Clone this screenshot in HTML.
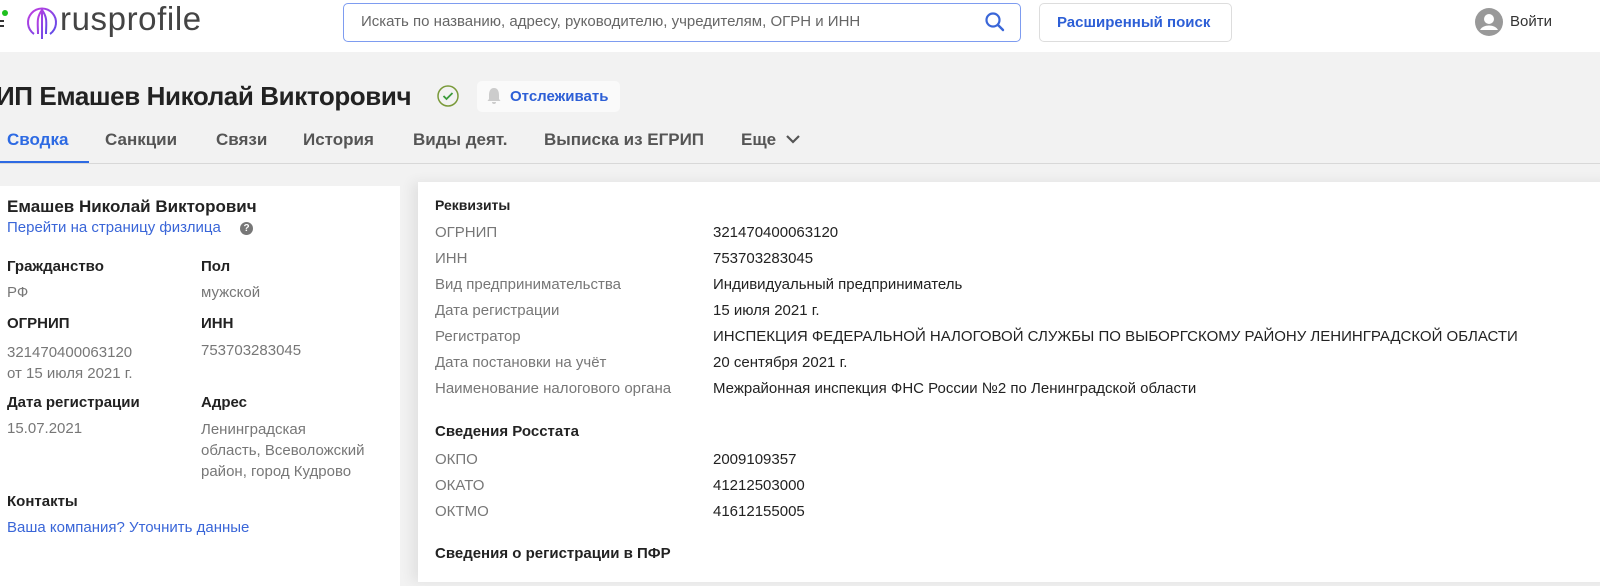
<!DOCTYPE html>
<html><head><meta charset="utf-8"><style>
*{margin:0;padding:0;box-sizing:border-box}
body{width:1600px;height:565px;overflow:hidden;background:#f2f2f2;font-family:"Liberation Sans",sans-serif;color:#222;position:relative}
.a{position:absolute;white-space:nowrap}
.hdr{position:absolute;left:0;top:0;width:1600px;height:52px;background:#fff}
.tab{position:absolute;top:130px;font-size:17px;color:#555;font-weight:bold}
.card{position:absolute;background:#fff}
.lb{color:#777;font-size:15px}
.v{font-size:15px;color:#222}
.b{font-weight:bold;font-size:15px;color:#222}
.lk{color:#3a66d8;font-size:15px}
</style></head><body>
<div class="hdr">
 <div class="a" style="left:0;top:20px;width:4px;height:2px;background:#333;box-shadow:0 5px 0 #333"></div>
 <div class="a" style="left:2px;top:10px;width:6px;height:6px;border-radius:50%;background:#1fc01f"></div>
 <svg class="a" style="left:26px;top:4px" width="32" height="36" viewBox="0 0 32 36"><defs><linearGradient id="g" x1="0" y1="0" x2="1" y2="1"><stop offset="0" stop-color="#c43de0"/><stop offset="1" stop-color="#5b4be8"/></linearGradient></defs><path d="M8 30 A14 14 0 1 1 24 30" fill="none" stroke="url(#g)" stroke-width="2"/><path d="M16 35 V8 M12 30 C12 20 10 14 16 6 C22 14 20 20 20 30" fill="none" stroke="url(#g)" stroke-width="2"/></svg>
 <div class="a" style="left:60px;top:0px;font-size:33px;color:#444;letter-spacing:0.6px">rusprofile</div>
 <div class="a" style="left:343px;top:3px;width:678px;height:39px;border:1px solid #7e9cf0;border-radius:5px"></div>
 <div class="a" style="left:361px;top:13px;font-size:15px;color:#666">Искать по названию, адресу, руководителю, учредителям, ОГРН и ИНН</div>
 <svg class="a" style="left:984px;top:11px" width="22" height="22" viewBox="0 0 22 22"><circle cx="9" cy="9" r="6.5" fill="none" stroke="#3a66d8" stroke-width="2.2"/><path d="M14 14 L19 19" stroke="#3a66d8" stroke-width="2.4" stroke-linecap="round"/></svg>
 <div class="a" style="left:1039px;top:3px;width:193px;height:39px;border:1px solid #ddd;border-radius:5px"></div>
 <div class="a" style="left:1057px;top:14px;font-size:15px;color:#2d5fd6;font-weight:bold">Расширенный поиск</div>
 <svg class="a" style="left:1475px;top:8px" width="28" height="28" viewBox="0 0 28 28"><circle cx="14" cy="14" r="14" fill="#999"/><circle cx="14" cy="11" r="5" fill="#fff"/><path d="M5 22 C8 16 20 16 23 22 Z" fill="#fff"/></svg>
 <div class="a" style="left:1510px;top:13px;font-size:15px;color:#333">Войти</div>
</div>
<div class="a" style="left:-4px;top:81px;font-size:26px;font-weight:bold;color:#222;letter-spacing:-0.4px">ИП Емашев Николай Викторович</div>
<svg class="a" style="left:436px;top:84px" width="24" height="24" viewBox="0 0 24 24"><circle cx="12" cy="12" r="10" fill="none" stroke="#7a9a3a" stroke-width="1.5"/><path d="M7.5 12 L10.5 15 L16.5 9" fill="none" stroke="#3a9a3a" stroke-width="1.8"/></svg>
<div class="a" style="left:477px;top:81px;width:143px;height:31px;background:#fafafa;border-radius:5px"></div>
<svg class="a" style="left:487px;top:87px" width="14" height="18" viewBox="0 0 14 18"><path d="M7 1 C3 1 2 5 2 8 V12 L0.5 14 H13.5 L12 12 V8 C12 5 11 1 7 1 Z M5 15 A2 2 0 0 0 9 15 Z" fill="#ccc"/></svg>
<div class="a" style="left:510px;top:88px;font-size:15px;color:#2d5fd6;font-weight:bold">Отслеживать</div>
<div class="tab" style="left:7px;color:#2d6ae3">Сводка</div>
<div class="tab" style="left:105px">Санкции</div>
<div class="tab" style="left:216px">Связи</div>
<div class="tab" style="left:303px">История</div>
<div class="tab" style="left:413px">Виды деят.</div>
<div class="tab" style="left:544px">Выписка из ЕГРИП</div>
<div class="tab" style="left:741px">Еще</div>
<svg class="a" style="left:785px;top:133px" width="16" height="12" viewBox="0 0 16 12"><path d="M2 3 L8 9 L14 3" fill="none" stroke="#555" stroke-width="2.2"/></svg>
<div class="a" style="left:0;top:163px;width:1600px;height:1px;background:#d8d8d8"></div>
<div class="a" style="left:0;top:161px;width:89px;height:2px;background:#2d6ae3"></div>

<div class="card" style="left:0;top:186px;width:400px;height:400px"></div>
<div class="card" style="left:418px;top:182px;width:1200px;height:400px;box-shadow:-6px 0 12px rgba(0,0,0,0.07)"></div>

<div class="a" style="left:7px;top:197px;font-size:17px;font-weight:bold;color:#222">Емашев Николай Викторович</div>
<div class="a lk" style="left:7px;top:219px">Перейти на страницу физлица</div>
<div class="a" style="left:240px;top:222px;width:13px;height:13px;border-radius:50%;background:#777;color:#fff;font-size:10px;font-weight:bold;text-align:center;line-height:13px">?</div>
<div class="a b" style="left:7px;top:258px">Гражданство</div>
<div class="a b" style="left:201px;top:258px">Пол</div>
<div class="a lb" style="left:7px;top:284px">РФ</div>
<div class="a lb" style="left:201px;top:284px">мужской</div>
<div class="a b" style="left:7px;top:315px">ОГРНИП</div>
<div class="a b" style="left:201px;top:315px">ИНН</div>
<div class="a lb" style="left:7px;top:342px;line-height:21px">321470400063120<br>от 15 июля 2021&nbsp;г.</div>
<div class="a lb" style="left:201px;top:342px">753703283045</div>
<div class="a b" style="left:7px;top:394px">Дата регистрации</div>
<div class="a b" style="left:201px;top:394px">Адрес</div>
<div class="a lb" style="left:7px;top:420px">15.07.2021</div>
<div class="a lb" style="left:201px;top:419px;line-height:21px">Ленинградская<br>область, Всеволожский<br>район, город Кудрово</div>
<div class="a b" style="left:7px;top:493px">Контакты</div>
<div class="a lk" style="left:7px;top:519px">Ваша компания? Уточнить данные</div>

<div class="a b" style="left:435px;top:197px;font-size:14px">Реквизиты</div>
<div class="a" style="left:435px;top:220px;line-height:26px" ><span class="lb">ОГРНИП<br>ИНН<br>Вид предпринимательства<br>Дата регистрации<br>Регистратор<br>Дата постановки на учёт<br>Наименование налогового органа</span></div>
<div class="a v" style="left:713px;top:220px;line-height:26px">321470400063120<br>753703283045<br>Индивидуальный предприниматель<br>15 июля 2021&nbsp;г.<br>ИНСПЕКЦИЯ ФЕДЕРАЛЬНОЙ НАЛОГОВОЙ СЛУЖБЫ ПО ВЫБОРГСКОМУ РАЙОНУ ЛЕНИНГРАДСКОЙ ОБЛАСТИ<br>20 сентября 2021&nbsp;г.<br>Межрайонная инспекция ФНС России №2 по Ленинградской области</div>
<div class="a b" style="left:435px;top:423px;font-size:15px">Сведения Росстата</div>
<div class="a lb" style="left:435px;top:447px;line-height:26px">ОКПО<br>ОКАТО<br>ОКТМО</div>
<div class="a v" style="left:713px;top:447px;line-height:26px">2009109357<br>41212503000<br>41612155005</div>
<div class="a b" style="left:435px;top:545px;font-size:15px">Сведения о регистрации в ПФР</div>
</body></html>
